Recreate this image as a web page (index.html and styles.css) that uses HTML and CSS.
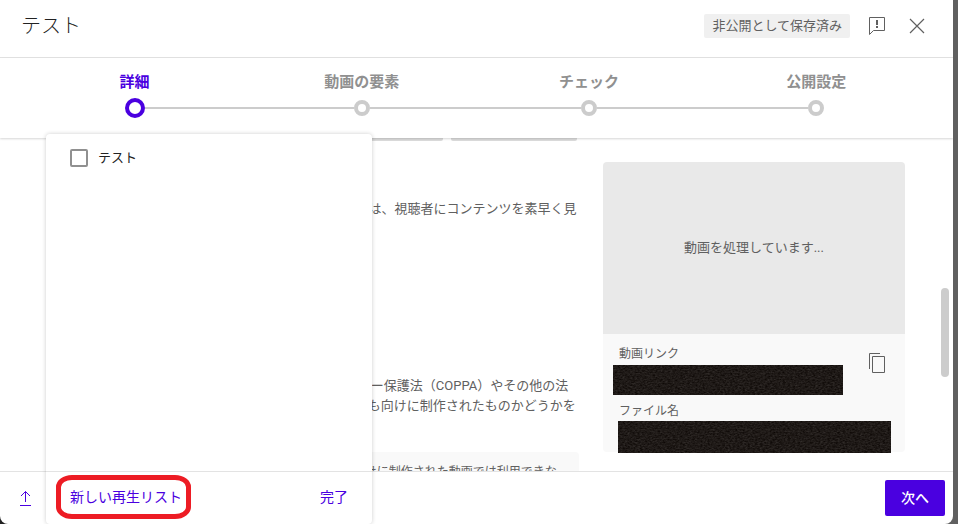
FILE: index.html
```html
<!DOCTYPE html>
<html lang="ja">
<head>
  <meta charset="UTF-8" />
  <meta name="viewport" content="width=device-width, initial-scale=1" />
  <title>テスト</title>
  <link rel="stylesheet" href="styles.css">
</head>
<body>
  <div class="dialog">
    <header class="header">
      <h1>テスト</h1>
      <span class="saved">非公開として保存済み</span>
      <button class="icon-button" aria-label="フィードバック">
        <svg width="18" height="20" viewBox="0 0 18 20" fill="none" stroke="#606060">
          <path d="M1.5 18.5V1.5h15v13h-11z" />
          <path d="M9 4v5M9 10v2" stroke-width="2" />
        </svg>
      </button>
      <button class="icon-button" aria-label="閉じる">
        <svg width="16" height="16" viewBox="0 0 16 16" stroke="#606060" stroke-width="1.2">
          <path d="M1 1l14 14M15 1L1 15" />
        </svg>
      </button>
    </header>

    <nav class="stepper">
      <button class="step active">詳細<span class="track"><span class="dot"></span></span></button>
      <button class="step">動画の要素<span class="track"><span class="dot"></span></span></button>
      <button class="step">チェック<span class="track"><span class="dot"></span></span></button>
      <button class="step">公開設定<span class="track"><span class="dot"></span></span></button>
    </nav>

    <main class="content">
      <div class="details">
        <div class="thumbs">
          <span></span><span></span><span></span>
        </div>
        <p class="playlist-help">動画を 1 つ以上の再生リストに入れます。再生リストは、視聴者にコンテンツを素早く見つけてもらうのに役立ちます。</p>
        <p class="audience-help">自身の住所にかかわらず、児童オンライン プライバシー保護法（COPPA）やその他の法令を守ることが法律上の義務です。自分の動画が子ども向けに制作されたものかどうかを申告する必要があります。</p>
        <p class="notice">パーソナライズド広告や通知などの機能は、子ども向けに制作された動画では利用できなくなります。</p>
      </div>

      <aside class="preview">
        <div class="video">動画を処理しています...</div>
        <div class="info">
          <div class="fields">
            <span class="label">動画リンク</span>
            <svg class="link-mask"><rect width="100%" height="100%" filter="url(#grain)" /></svg>
            <span class="label">ファイル名</span>
            <svg class="file-mask"><rect width="100%" height="100%" filter="url(#grain)" /></svg>
          </div>
          <button class="copy" aria-label="動画リンクをコピー">
            <svg width="18" height="22" viewBox="0 0 18 22" fill="none" stroke="#606060">
              <path d="M1.5 17V1.5H12" />
              <path d="M4.5 4.5h12v16h-12z" />
            </svg>
          </button>
        </div>
      </aside>
      <div class="scrollbar"></div>
    </main>

    <footer class="footer">
      <svg width="12" height="16" viewBox="0 0 12 16" fill="none" stroke="#4a00e0">
        <path d="M5.5 12V1.5M1 6l4.5-4.5L10 6M0 15.5h11" />
      </svg>
      <button class="next">次へ</button>
    </footer>

    <div class="playlist-menu">
      <div class="options">
        <label class="option"><input type="checkbox">テスト</label>
      </div>
      <div class="actions">
        <button class="new-playlist">新しい再生リスト</button>
        <button>完了</button>
      </div>
    </div>
  </div>

  <svg class="defs">
    <filter id="grain" x="0" y="0" width="100%" height="100%" color-interpolation-filters="sRGB">
      <feTurbulence type="fractalNoise" baseFrequency="0.4 0.7" numOctaves="3" />
      <feColorMatrix values="0.2 0 0 0 0.02  0.2 0 0 0 0  0.2 0 0 0 -0.01  0 0 0 0 1" />
    </filter>
  </svg>
</body>
</html>
```

FILE: styles.css
```css
* {
  box-sizing: border-box;
}
body {
  margin: 0;
  background: linear-gradient(to right, #222 50%, #606060 50%);
  color: #606060;
  font-family: Roboto, 'Noto Sans CJK JP', sans-serif;
  font-size: 13px;
  line-height: 20px;
}
h1, p {
  margin: 0;
}
button {
  padding: 0;
  border: 0;
  background: none;
  color: inherit;
  font: inherit;
  cursor: pointer;
}
svg {
  display: block;
}
.dialog {
  position: relative;
  display: flex;
  flex-direction: column;
  height: 100vh;
  margin-right: 5px;
  background: #fff;
  border-radius: 0 0 8px 8px;
  overflow: hidden;
}

.header {
  display: flex;
  align-items: center;
  padding: 8px 28px 13px 21px;
  border-bottom: 1px solid #e3e3e3;
}
.header h1 {
  flex: 1;
  color: #222;
  font-size: 20px;
  font-weight: 300;
  line-height: 36px;
}
.saved {
  padding: 2px 8px;
  background: #f0f0f0;
  border-radius: 2px;
}
.icon-button {
  margin-left: 18px;
}
.icon-button + .icon-button {
  margin-left: 23px;
}

.stepper {
  z-index: 1;
  display: grid;
  grid-template-columns: repeat(4, 1fr);
  padding: 14px 23px 20px 21px;
  background: #fff;
  box-shadow: 0 1px 2px rgba(0, 0, 0, 0.16);
}
.step {
  display: flex;
  flex-direction: column;
  align-items: center;
  gap: 6px;
  color: #909090;
  font-size: 15px;
  font-weight: 700;
  line-height: 20px;
}
.track {
  display: flex;
  align-items: center;
  width: 100%;
  height: 20px;
}
.track::before, .track::after {
  content: "";
  flex: 1;
  height: 2px;
  background: #ccc;
}
.step:first-child .track::before, .step:last-child .track::after {
  background: none;
}
.dot {
  width: 16px;
  height: 16px;
  border: 4px solid #ccc;
  border-radius: 50%;
}
.step.active {
  color: #4a00e0;
}
.active .dot {
  width: 20px;
  height: 20px;
  border-color: #4a00e0;
}

.content {
  position: relative;
  display: flex;
  flex: 1;
  gap: 24px;
  min-height: 0;
  padding: 0 48px 0 57px;
  overflow: hidden;
}
.details {
  flex: 1;
}
.thumbs {
  display: flex;
  justify-content: flex-end;
  gap: 8px;
  padding-right: 2px;
}
.thumbs span {
  width: 126px;
  height: 3px;
  background: #dcdcdc;
  border-radius: 0 0 2px 2px;
}
.playlist-help {
  margin-top: 58px;
}
.audience-help {
  margin-top: 137px;
}
.notice {
  margin-top: 16px;
  padding: 12px 16px 12px 20px;
  background: #f9f9f9;
  border-radius: 4px;
  font-size: 12px;
  line-height: 16px;
}

.preview {
  flex: 0 0 302px;
  margin-top: 24px;
}
.video {
  display: flex;
  align-items: center;
  justify-content: center;
  height: 172px;
  background: #e9e9e9;
  border-radius: 4px 4px 0 0;
}
.info {
  display: flex;
  justify-content: space-between;
  height: 118px;
  padding: 12px 19px 0 10px;
  background: #f9f9f9;
  border-radius: 0 0 4px 4px;
}
.fields {
  flex: 1;
  width: 0;
}
.label {
  display: block;
  padding-left: 6px;
  font-size: 12px;
  line-height: 16px;
}
.link-mask {
  width: 230px;
  height: 30px;
  margin: 3px 0 8px;
}
.file-mask {
  width: 273px;
  height: 32px;
  margin: 2px 0 0 5px;
}
.copy {
  align-self: flex-start;
  margin-top: 6px;
}
.scrollbar {
  position: absolute;
  top: 150px;
  right: 4px;
  width: 8px;
  height: 89px;
  background: #ccc;
  border-radius: 4px;
}

.footer {
  display: flex;
  align-items: center;
  justify-content: space-between;
  padding: 8px 8px 8px 20px;
  border-top: 1px solid #e3e3e3;
}
.next {
  width: 60px;
  height: 36px;
  background: #4a00e0;
  border-radius: 2px;
  color: #fff;
  font-size: 14px;
  font-weight: 500;
}

.playlist-menu {
  position: absolute;
  z-index: 2;
  top: 134px;
  bottom: 0;
  left: 46px;
  display: flex;
  flex-direction: column;
  width: 326px;
  background: #fff;
  border-radius: 4px;
  box-shadow: 0 0 4px rgba(0, 0, 0, 0.2);
}
.options {
  flex: 1;
  padding: 14px 24px;
}
.option {
  display: flex;
  align-items: center;
  gap: 10px;
  color: #222;
}
.option input {
  appearance: none;
  width: 18px;
  height: 18px;
  margin: 0;
  border: 2px solid #909090;
  border-radius: 2px;
}
.actions {
  display: flex;
  align-items: center;
  justify-content: space-between;
  padding: 3px 24px 5px 10px;
  border-top: 1px solid #e3e3e3;
  color: #4a00e0;
  font-size: 14px;
}
.new-playlist {
  width: 135px;
  height: 44px;
  padding-left: 9px;
  border: 5px solid #ed1c24;
  border-radius: 16px / 12px;
  text-align: left;
  white-space: nowrap;
}

.defs {
  position: absolute;
  width: 0;
  height: 0;
}
```
